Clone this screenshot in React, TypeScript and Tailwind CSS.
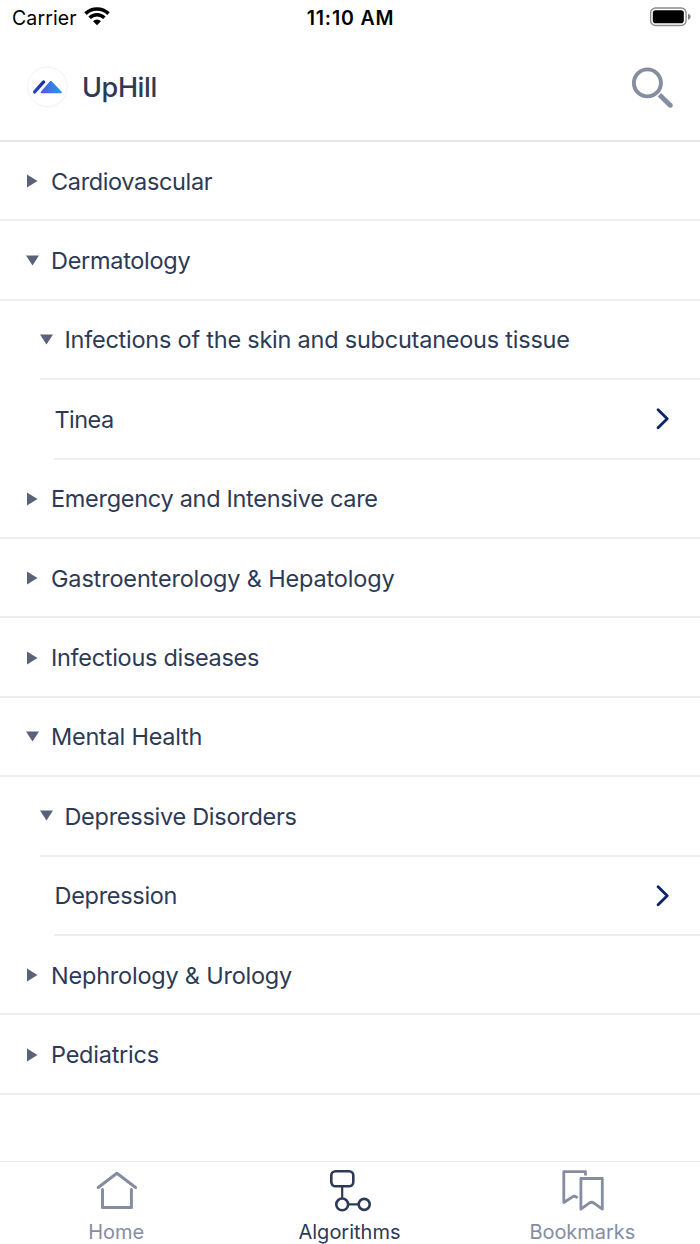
import { useState } from "react";

interface Topic {
  name: string;
  level: 0 | 1 | 2;
  open?: boolean;
  tracking: string;
}

const topics: Topic[] = [
  { name: "Cardiovascular", level: 0, tracking: "tracking-[-0.36px]" },
  { name: "Dermatology", level: 0, open: true, tracking: "tracking-[-0.3px]" },
  { name: "Infections of the skin and subcutaneous tissue", level: 1, open: true, tracking: "tracking-[-0.23px]" },
  { name: "Tinea", level: 2, tracking: "tracking-[-0.55px]" },
  { name: "Emergency and Intensive care", level: 0, tracking: "tracking-[-0.3px]" },
  { name: "Gastroenterology & Hepatology", level: 0, tracking: "tracking-[-0.17px]" },
  { name: "Infectious diseases", level: 0, tracking: "tracking-[-0.3px]" },
  { name: "Mental Health", level: 0, open: true, tracking: "tracking-[-0.24px]" },
  { name: "Depressive Disorders", level: 1, open: true, tracking: "tracking-[-0.27px]" },
  { name: "Depression", level: 2, tracking: "tracking-[-0.3px]" },
  { name: "Nephrology & Urology", level: 0, tracking: "tracking-[-0.22px]" },
  { name: "Pediatrics", level: 0, tracking: "tracking-[-0.24px]" },
];

// left edge of each row and its divider
const indent = { 0: "ml-0 pl-[26px]", 1: "ml-[40px]", 2: "ml-[54px]" };

function StatusBar() {
  return (
    <div className="grid h-9 grid-cols-3 items-center pl-3 pr-[9px] text-black">
      <div className="flex items-center gap-[7px]">
        <span className="text-[19.5px] leading-9 tracking-[0.1px]">Carrier</span>
        <svg className="-mt-1" width="26" height="20" viewBox="0 0 26 20" fill="none" stroke="#000">
          <path d="M1.5 7.6a16.5 16.5 0 0 1 23 0" strokeWidth="3.6" />
          <path d="M5.6 11.8a10.6 10.6 0 0 1 14.8 0" strokeWidth="3.5" />
          <path d="M13 19.2l-4-4a5.7 5.7 0 0 1 8 0z" fill="#000" stroke="none" />
        </svg>
      </div>
      <div className="-ml-[2px] text-center text-[19.5px] font-semibold leading-9 tracking-[0.85px]">11:10 AM</div>
      <svg className="-mt-[2px] justify-self-end" width="42" height="20" viewBox="0 0 42 20">
        <rect x="1.6" y="1" width="35.5" height="17.5" rx="5" fill="none" stroke="#8c8c8c" strokeWidth="1.4" />
        <rect x="3.8" y="3.2" width="31" height="13" rx="2.8" fill="#000" />
        <path d="M39 6.7c1.8.6 2.6 1.6 2.6 3s-.8 2.4-2.6 3z" fill="#808080" />
      </svg>
    </div>
  );
}

function Header() {
  return (
    <header className="flex h-[106px] items-center border-b-2 border-[#e4e5ea] pl-[27px] pr-[26px]">
      <svg className="-mt-[2px]" width="41" height="42" viewBox="0 0 41 42">
        <defs>
          <linearGradient id="slope" x1="0" y1="1" x2="1" y2="0">
            <stop offset="0" stopColor="#2947cf" />
            <stop offset="1" stopColor="#153292" />
          </linearGradient>
          <linearGradient id="peak" x1="0" y1="0" x2="1" y2="0">
            <stop offset="0" stopColor="#5158e6" />
            <stop offset="1" stopColor="#259bdc" />
          </linearGradient>
        </defs>
        <circle cx="20.5" cy="20.8" r="19.8" fill="#fff" stroke="#f1f1f2" strokeWidth="1" />
        <path d="M7.6 25.9L16.6 15.9" stroke="url(#slope)" strokeWidth="3.3" strokeLinecap="round" />
        <path d="M14.5 26.4L23.8 15.6L34 26.4Z" fill="url(#peak)" stroke="url(#peak)" strokeWidth="1.7" strokeLinejoin="round" />
      </svg>
      <h1 className="mt-px ml-[14px] text-[27px] font-medium tracking-[-0.4px] text-[#2d3a56]">UpHill</h1>
      <button className="ml-auto" aria-label="Search">
        <svg width="43" height="43" viewBox="0 0 43 43" fill="none" stroke="#858da1">
          <circle cx="16.4" cy="15.9" r="13.5" strokeWidth="3.9" />
          <path d="M28.4 27.8L39.4 38.4" strokeWidth="4.8" />
          <circle cx="39.4" cy="38.4" r="2.4" fill="#858da1" stroke="none" />
        </svg>
      </button>
    </header>
  );
}

function Arrow({ open }: { open?: boolean }) {
  return (
    <svg className="shrink-0" width="13" height="14" viewBox="0 0 13 14" fill="#596278">
      {open ? <path d="M0 1.5h13L6.5 11.5z" /> : <path d="M1 .5v13L11.5 7z" />}
    </svg>
  );
}

function TopicRow({ topic, onToggle }: { topic: Topic; onToggle: () => void }) {
  const leaf = topic.level === 2;
  return (
    <li
      onClick={onToggle}
      className={`flex h-[79.42px] items-center border-b-2 border-[#eeeeef] pt-px ${indent[topic.level]}`}
    >
      {!leaf && <Arrow open={topic.open} />}
      <span
        className={`whitespace-nowrap text-[23.5px] text-[#2d3a56] ${topic.tracking} ${
          leaf ? "ml-[0.5px]" : topic.level === 1 ? "ml-[11.4px]" : "ml-[12px]"
        }`}
      >
        {topic.name}
      </span>
      {leaf && (
        <svg className="ml-auto mr-[30px]" width="15" height="22" viewBox="0 0 15 22" fill="none" stroke="#0a2466">
          <path d="M3.1 1.8L12.2 10.8L3.1 19.8" strokeWidth="2.8" strokeLinecap="round" strokeLinejoin="round" />
        </svg>
      )}
    </li>
  );
}

function TabBar() {
  return (
    <nav className="mt-auto grid h-[83px] grid-cols-3 border-t-[1.5px] border-[#e6e7e9] text-[20px] text-[#858da1]">
      <a className="flex flex-col items-center">
        <svg className="mt-[8px]" width="42" height="42" viewBox="0 0 42 42" fill="none" stroke="#858da1" strokeWidth="3">
          <path d="M2.2 17.5L20.9 3.3L39.6 17.5" strokeLinecap="round" strokeLinejoin="round" />
          <path d="M6.5 19.5V37.4H35.4V19.5" strokeLinecap="round" strokeLinejoin="round" />
        </svg>
        <span className="mt-[8px] -ml-px leading-6">Home</span>
      </a>
      <a className="flex flex-col items-center text-[#2d3a56]">
        <svg className="mt-[8px]" width="42" height="42" viewBox="0 0 42 42" fill="none" stroke="#2d3a56" strokeWidth="2.6">
          <rect x="2.3" y="1.3" width="22" height="15" rx="4.2" />
          <path d="M13.2 16.3V28.5M19.5 34.4H29.5" strokeWidth="2.2" />
          <circle cx="13.2" cy="34.4" r="5.9" />
          <circle cx="35.2" cy="34.4" r="5.5" />
        </svg>
        <span className="mt-[8px] -ml-px leading-6">Algorithms</span>
      </a>
      <a className="flex flex-col items-center">
        <svg className="mt-[8px]" width="42" height="42" viewBox="0 0 42 42" fill="none" stroke="#858da1" strokeWidth="2.8" strokeLinejoin="round">
          <path d="M23.5 5.4V1.7H1.8V32.5L10.5 26.8Q12.8 25.3 15.5 28" />
          <path d="M18.9 8.5H40.3V39.2L32 33.2Q29.6 31.4 27.2 33.2L18.9 39.2Z" />
        </svg>
        <span className="mt-[8px] -ml-[2px] leading-6 tracking-[-0.05px]">Bookmarks</span>
      </a>
    </nav>
  );
}

export default function App() {
  const [rows, setRows] = useState(topics);

  const toggle = (name: string) =>
    setRows(rows.map((r) => (r.name === name && r.level < 2 ? { ...r, open: !r.open } : r)));

  return (
    <div className="flex h-[1244px] w-[700px] flex-col overflow-hidden bg-white font-['Inter','Liberation_Sans',sans-serif]">
      <StatusBar />
      <Header />
      <ul>
        {rows.map((topic) => (
          <TopicRow key={topic.name} topic={topic} onToggle={() => toggle(topic.name)} />
        ))}
      </ul>
      <TabBar />
    </div>
  );
}
